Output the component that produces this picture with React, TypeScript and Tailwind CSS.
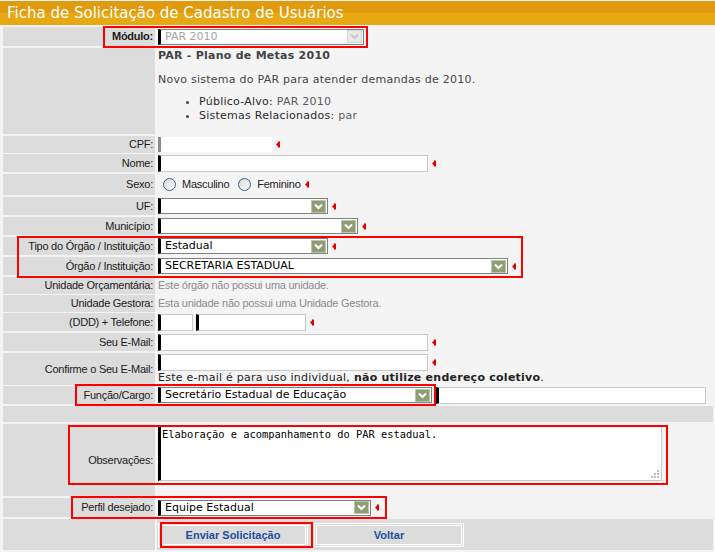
import React from "react";

const labelFont = "font-['Liberation_Sans',Arial,sans-serif] text-[11px] tracking-[-0.25px]";
const verdana = "font-['DejaVu_Sans',Verdana,sans-serif] text-[11px]";

function Req() {
  return (
    <svg width="4" height="7" viewBox="0 0 4 7" className="ml-[4px] shrink-0">
      <path d="M0 3.5L2 1.5V5.5Z" fill="#e00000" />
      <rect x="2" y="0.5" width="2" height="6" fill="#e00000" />
    </svg>
  );
}

function DropButton({ disabled }: { disabled?: boolean }) {
  return (
    <svg width="15" height="13" viewBox="0 0 15 13" className="mr-px shrink-0">
      <rect
        x="0.5"
        y="0.5"
        width="14"
        height="12"
        fill={disabled ? "#e9e9e9" : "#8e9d74"}
        stroke={disabled ? "#d6d6d6" : "#bcc6a9"}
      />
      <polyline
        points="4,4.5 7.5,8 11,4.5"
        fill="none"
        stroke={disabled ? "#c9c9c9" : "#ffffff"}
        strokeWidth="2"
      />
    </svg>
  );
}

function Select({ w, value, disabled }: { w: string; value?: string; disabled?: boolean }) {
  return (
    <div
      className={`flex h-[16px] shrink-0 items-center border border-l-[3px] border-[#808080] border-l-black bg-white ${w}`}
    >
      <span
        className={`flex-1 truncate pl-[4px] leading-[14px] ${verdana} ${
          disabled ? "text-[#a3a3a3]" : "text-black"
        }`}
      >
        {value}
      </span>
      <DropButton disabled={disabled} />
    </div>
  );
}

function Input({ w }: { w: string }) {
  return (
    <div
      className={`h-[17px] shrink-0 border border-l-[3px] border-[#c9c9c9] border-l-black bg-white ${w}`}
    />
  );
}

function Radio({ label }: { label: string }) {
  return (
    <label className="flex items-center">
      <span className="h-[13px] w-[13px] rounded-full border border-[#33618f] bg-gradient-to-br from-[#d6d6d6] to-white" />
      <span className={`ml-[6px] text-[#222] ${labelFont}`}>{label}</span>
    </label>
  );
}

function Row({
  label,
  h,
  bold,
  gray,
  cell = "items-center",
  children,
}: {
  label?: string;
  h: string;
  bold?: boolean;
  gray?: boolean;
  cell?: string;
  children?: React.ReactNode;
}) {
  return (
    <div className={`grid grid-cols-[152px_1fr] gap-x-[2px] ${h}`}>
      <div
        className={`flex items-center justify-end bg-[#dcdcdc] pr-[2px] text-[#1a1a1a] ${labelFont} ${
          bold ? "font-bold" : ""
        }`}
      >
        {label}
      </div>
      <div className={`flex pl-px ${cell} ${gray ? "bg-[#dcdcdc]" : ""}`}>{children}</div>
    </div>
  );
}

function Button({ children }: { children: React.ReactNode }) {
  return (
    <button
      type="button"
      className="h-[24px] w-[150px] border-[3px] border-double border-white bg-[#dcdcdc] pt-px font-['Liberation_Sans',Arial,sans-serif] text-[11px] font-bold text-[#1b4f9c]"
    >
      {children}
    </button>
  );
}

export default function App() {
  return (
    <div className="relative min-h-[552px] bg-[#f4f4f4] pt-px">
      <div className="flex h-[24px] items-center bg-[linear-gradient(to_bottom,#e09a0b_50%,#e6a913_50%)] pl-[7px]">
        <h1 className="font-['DejaVu_Sans',Verdana,sans-serif] text-[15px] leading-none text-white">
          Ficha de Solicitação de Cadastro de Usuários
        </h1>
      </div>

      <div className="flex flex-col gap-[2px] pb-[2px] pl-[3px] pr-[2px] pt-[2px]">
        <Row label="Módulo:" bold h="h-[19px]">
          <Select w="w-[206px]" value="PAR 2010" disabled />
        </Row>

        <Row h="h-[86px]" cell="flex-col pt-px">
          <div className={`text-[#444] leading-[14px] tracking-[0.25px] ${verdana}`}>
            <p className="font-bold">PAR - Plano de Metas 2010</p>
            <p className="mt-[10px]">Novo sistema do PAR para atender demandas de 2010.</p>
            <ul className="mt-[8px] list-disc pl-[41px]">
              <li>
                <span className="text-[#2a2a2a]">Público-Alvo:</span>{" "}
                <span className="text-[#5a5a5a]">PAR 2010</span>
              </li>
              <li>
                <span className="text-[#2a2a2a]">Sistemas Relacionados:</span>{" "}
                <span className="text-[#5a5a5a]">par</span>
              </li>
            </ul>
          </div>
        </Row>

        <Row label="CPF:" h="h-[16px]">
          <div className="h-[15px] w-[114px] border-l-[3px] border-l-[#8a8a8a] bg-white" />
          <Req />
        </Row>

        <Row label="Nome:" h="h-[18px]">
          <Input w="w-[270px]" />
          <Req />
        </Row>

        <Row label="Sexo:" h="h-[21px]">
          <div className="ml-[5px] flex items-center gap-[9px]">
            <Radio label="Masculino" />
            <Radio label="Feminino" />
          </div>
          <Req />
        </Row>

        <Row label="UF:" h="h-[18px]">
          <Select w="w-[170px]" />
          <Req />
        </Row>

        <Row label="Município:" h="h-[18px]">
          <Select w="w-[200px]" />
          <Req />
        </Row>

        <Row label="Tipo do Órgão / Instituição:" h="h-[18px]">
          <Select w="w-[170px]" value="Estadual" />
          <Req />
        </Row>

        <Row label="Órgão / Instituição:" h="h-[18px]">
          <Select w="w-[350px]" value="SECRETARIA ESTADUAL" />
          <Req />
        </Row>

        <Row label="Unidade Orçamentária:" h="h-[16px]">
          <span className={`text-[#8c8c8c] ${labelFont}`}>Este órgão não possui uma unidade.</span>
        </Row>

        <Row label="Unidade Gestora:" h="h-[16px]">
          <span className={`text-[#8c8c8c] ${labelFont}`}>
            Esta unidade não possui uma Unidade Gestora.
          </span>
        </Row>

        <Row label="(DDD) + Telefone:" h="h-[18px]">
          <Input w="w-[35px]" />
          <div className="ml-[3px]">
            <Input w="w-[110px]" />
          </div>
          <Req />
        </Row>

        <Row label="Seu E-Mail:" h="h-[18px]">
          <Input w="w-[270px]" />
          <Req />
        </Row>

        <Row label="Confirme o Seu E-Mail:" h="h-[31px]" cell="flex-col pt-px">
          <div className="flex items-center">
            <Input w="w-[270px]" />
            <Req />
          </div>
          <p className={`leading-[14px] tracking-[0.25px] text-[#222] ${verdana}`}>
            Este e-mail é para uso individual, <b>não utilize endereço coletivo</b>.
          </p>
        </Row>

        <Row label="Função/Cargo:" h="h-[18px]">
          <Select w="w-[274px]" value="Secretário Estadual de Educação" />
          <div className="ml-[4px]">
            <Input w="w-[270px]" />
          </div>
        </Row>

        <div className="h-[16px] bg-[#dcdcdc]" />

        <Row label="Observações:" h="h-[72px]" cell="items-start pt-[2px]">
          <div className="relative h-[55px] w-[504px] border border-l-[3px] border-[#c9c9c9] border-l-black bg-white px-[1px] py-[1px]">
            <textarea
              readOnly
              defaultValue="Elaboração e acompanhamento do PAR estadual."
              className="h-full w-full resize-none font-['DejaVu_Sans_Mono','Courier_New',monospace] text-[10.4px] leading-[13px] text-black outline-none"
            />
            <svg width="8" height="8" viewBox="0 0 8 8" className="absolute bottom-[2px] right-[2px]">
              <rect x="6" y="0" width="2" height="2" fill="#bdbdbd" />
              <rect x="3" y="3" width="2" height="2" fill="#bdbdbd" />
              <rect x="6" y="3" width="2" height="2" fill="#bdbdbd" />
              <rect x="0" y="6" width="2" height="2" fill="#bdbdbd" />
              <rect x="3" y="6" width="2" height="2" fill="#bdbdbd" />
              <rect x="6" y="6" width="2" height="2" fill="#bdbdbd" />
            </svg>
          </div>
        </Row>

        <Row label="Perfil desejado:" h="h-[19px]">
          <Select w="w-[213px]" value="Equipe Estadual" />
          <Req />
        </Row>

        <Row h="h-[31px]" gray cell="items-start gap-[6px] pl-[4px] pt-[4px]">
          <Button>Enviar Solicitação</Button>
          <Button>Voltar</Button>
        </Row>
      </div>

      {/* red highlight boxes */}
      <div className="pointer-events-none absolute left-[103px] top-[26px] h-[22px] w-[265px] border-2 border-[#ff0000]" />
      <div className="pointer-events-none absolute left-[17px] top-[236px] h-[42px] w-[506px] border-2 border-[#ff0000]" />
      <div className="pointer-events-none absolute left-[75px] top-[384px] h-[22px] w-[361px] border-2 border-[#ff0000]" />
      <div className="pointer-events-none absolute left-[68px] top-[425px] h-[60px] w-[600px] border-2 border-[#ff0000]" />
      <div className="pointer-events-none absolute left-[71px] top-[496px] h-[23px] w-[316px] border-2 border-[#ff0000]" />
      <div className="pointer-events-none absolute left-[160px] top-[522px] h-[26px] w-[153px] border-2 border-[#ff0000]" />
    </div>
  );
}
